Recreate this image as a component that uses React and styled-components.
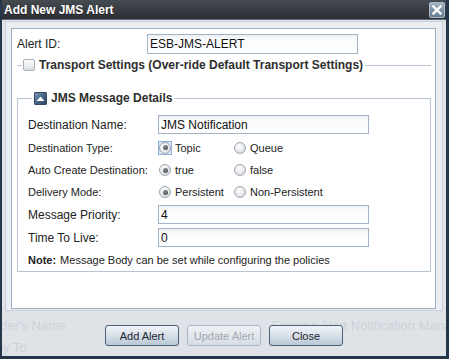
import React from "react";
import styled, { createGlobalStyle } from "styled-components";

const GlobalStyle = createGlobalStyle`
  html, body {
    margin: 0;
    padding: 0;
    background: #dfe3e8;
  }
  body {
    font-family: "Liberation Sans", Arial, sans-serif;
  }
`;

const Dialog = styled.div`
  width: 449px;
  height: 359px;
  box-sizing: border-box;
  display: flex;
  flex-direction: column;
  background: #dfe3e8;
  border-left: 2px solid #26364a;
  border-right: 3px solid #26364a;
  border-bottom: 3px solid #26364a;
  overflow: hidden;
`;

const TitleBar = styled.div`
  height: 19px;
  flex: none;
  display: flex;
  align-items: center;
  justify-content: space-between;
  padding: 0 2px 0 2px;
  margin-left: -2px;
  margin-right: -3px;
  background: linear-gradient(#464a51 0%, #3a3e44 45%, #2c2f34 100%);
  border-bottom: 1px solid #5b6b7c;
`;

const Title = styled.span`
  color: #fff;
  font-weight: bold;
  font-size: 12px;
  padding-left: 2px;
  text-shadow: 0 1px 0 #1a1c1f;
`;

const CloseBox = styled.div`
  width: 16px;
  height: 16px;
  box-sizing: border-box;
  margin-right: 2px;
  margin-top: 1px;
  border: 1px solid #aab7c6;
  border-radius: 2px;
  background: linear-gradient(#a4b4c6 0%, #7c90a7 50%, #667c95 100%);
  display: flex;
  align-items: center;
  justify-content: center;
`;

const Body = styled.div`
  flex: none;
  padding: 1px 3px 0 3px;
`;

const Frame = styled.div`
  height: 290px;
  box-sizing: border-box;
  border: 1px solid #c7d0da;
  background: #ebeef1;
  padding: 6px 6px 1px 5px;
`;

const Panel = styled.div`
  height: 100%;
  box-sizing: border-box;
  border: 1px solid #9db0c6;
  background: #fff;
  padding: 5px 4px 0 5px;
  color: #222;
`;

const TopRow = styled.div`
  display: flex;
  align-items: center;
  height: 20px;
`;

const TopLabel = styled.span`
  width: 130px;
  font-size: 12px;
`;

const TextInput = styled.input`
  width: ${(p) => p.$w}px;
  height: ${(p) => p.$h}px;
  box-sizing: border-box;
  border: 1px solid #a3b3c5;
  background: linear-gradient(#eceef1 0px, #fbfbfc 4px, #fff 100%);
  padding: 0 0 0 ${(p) => p.$pad || 2}px;
  margin: 0;
  font-family: "Liberation Sans", Arial, sans-serif;
  font-size: 12px;
  color: #111;
  outline: none;
`;

const Section = styled.fieldset`
  margin: ${(p) => p.$top}px 0 0 0;
  padding: ${(p) => (p.$collapsed ? "0" : "8px 10px 1px 10px")};
  border: none;
  border-top: 1px solid #b8c4d2;
  border-left: ${(p) => (p.$collapsed ? "none" : "1px solid #b8c4d2")};
  border-right: ${(p) => (p.$collapsed ? "none" : "1px solid #b8c4d2")};
  border-bottom: ${(p) => (p.$collapsed ? "none" : "1px solid #b8c4d2")};
  min-width: 0;
`;

const Legend = styled.legend`
  display: flex;
  align-items: center;
  gap: ${(p) => p.$gap}px;
  height: 14px;
  margin-left: ${(p) => p.$ml}px;
  padding: 0 2px 0 ${(p) => p.$pl}px;
  font-size: 12px;
  font-weight: bold;
  color: #2e2e2e;
  line-height: 14px;
`;

const CheckBox = styled.span`
  width: 12px;
  height: 12px;
  box-sizing: border-box;
  border: 1px solid #a9b0b8;
  border-radius: 2px;
  background: linear-gradient(#fdfdfd, #dcdfe3);
`;

const CollapseIcon = styled.span`
  width: 13px;
  height: 13px;
  box-sizing: border-box;
  border: 1px solid #34485f;
  border-radius: 1px;
  background: linear-gradient(135deg, #7f98b5 0%, #4c6989 45%, #2c4563 100%);
  display: flex;
  align-items: center;
  justify-content: center;
`;

const Row = styled.div`
  display: flex;
  align-items: center;
  height: ${(p) => p.$h}px;
`;

const Label = styled.span`
  width: 130px;
  flex: none;
  font-size: ${(p) => (p.$small ? 11 : 12)}px;
  color: #222;
`;

const Option = styled.label`
  display: flex;
  align-items: center;
  width: 75px;
  font-size: 11px;
  color: #222;
  white-space: nowrap;
`;

const RadioWrap = styled.span`
  width: 14px;
  height: 14px;
  box-sizing: border-box;
  margin-right: 3px;
  display: flex;
  align-items: center;
  justify-content: center;
  border: 1px solid ${(p) => (p.$focus ? "#8fb0da" : "transparent")};
  background: ${(p) => (p.$focus ? "#dbe7f6" : "transparent")};
`;

const RadioCircle = styled.span`
  width: 12px;
  height: 12px;
  box-sizing: border-box;
  border-radius: 50%;
  border: 1px solid #a2a9b1;
  background: radial-gradient(circle at 40% 35%, #ffffff 0%, #e8eaed 50%, #c9cdd2 100%);
  display: flex;
  align-items: center;
  justify-content: center;

  &::after {
    content: "";
    display: ${(p) => (p.$checked ? "block" : "none")};
    width: 5px;
    height: 5px;
    border-radius: 50%;
    background: radial-gradient(circle at 40% 35%, #8a8f95, #3e4247);
  }
`;

const Note = styled.div`
  height: 21px;
  display: flex;
  align-items: center;
  font-size: 11px;
  color: #222;
  white-space: nowrap;

  b {
    margin-right: 4px;
  }
`;

const Footer = styled.div`
  position: relative;
  flex: 1;
  display: flex;
  justify-content: center;
  gap: 8px;
  padding-top: 14px;
  overflow: hidden;
`;

const Ghost = styled.span`
  position: absolute;
  left: ${(p) => p.$x}px;
  top: ${(p) => p.$y}px;
  font-size: 13px;
  color: #cdd2d7;
  white-space: nowrap;
`;

const Button = styled.button`
  position: relative;
  width: 74px;
  height: 21px;
  box-sizing: border-box;
  border-radius: 3px;
  border: 1px solid ${(p) => (p.disabled ? "#a9b6c3" : "#4a6079")};
  background: ${(p) =>
    p.disabled
      ? "linear-gradient(#eef1f4 0%, #e3e8ed 50%, #d6dde4 100%)"
      : "linear-gradient(#f0f3f6 0%, #dbe2ea 45%, #b9c7d6 100%)"};
  color: ${(p) => (p.disabled ? "#a2a8ae" : "#1e2630")};
  font-family: "Liberation Sans", Arial, sans-serif;
  font-size: 11px;
  padding: 0;
`;

const Radio = ({ checked, focus, children }) => (
  <Option>
    <RadioWrap $focus={focus}>
      <RadioCircle $checked={checked} />
    </RadioWrap>
    {children}
  </Option>
);

export default function App() {
  return (
    <>
      <GlobalStyle />
      <Dialog>
        <TitleBar>
          <Title>Add New JMS Alert</Title>
          <CloseBox>
            <svg width="10" height="10" viewBox="0 0 10 10">
              <path d="M1.5 1.5 L8.5 8.5 M8.5 1.5 L1.5 8.5" stroke="#fff" strokeWidth="2.4" strokeLinecap="square" />
            </svg>
          </CloseBox>
        </TitleBar>
        <Body>
          <Frame>
            <Panel>
              <TopRow>
                <TopLabel>Alert ID:</TopLabel>
                <TextInput $w={211} $h={20} defaultValue="ESB-JMS-ALERT" />
              </TopRow>

              <Section $collapsed $top={4}>
                <Legend $ml={5} $pl={1} $gap={4}>
                  <CheckBox />
                  Transport Settings (Over-ride Default Transport Settings)
                </Legend>
              </Section>

              <Section $top={19}>
                <Legend $ml={4} $pl={2} $gap={4}>
                  <CollapseIcon>
                    <svg width="9" height="7" viewBox="0 0 9 7">
                      <path d="M0.5 6 L4.5 1.5 L8.5 6 Z" fill="#fff" />
                    </svg>
                  </CollapseIcon>
                  JMS Message Details
                </Legend>

                <Row $h={23}>
                  <Label>Destination Name:</Label>
                  <TextInput $w={211} $h={19} defaultValue="JMS Notification" />
                </Row>
                <Row $h={23}>
                  <Label $small>Destination Type:</Label>
                  <Radio checked focus>Topic</Radio>
                  <Radio>Queue</Radio>
                </Row>
                <Row $h={22}>
                  <Label $small>Auto Create Destination:</Label>
                  <Radio checked>true</Radio>
                  <Radio>false</Radio>
                </Row>
                <Row $h={22}>
                  <Label $small>Delivery Mode:</Label>
                  <Radio checked>Persistent</Radio>
                  <Radio>Non-Persistent</Radio>
                </Row>
                <Row $h={23}>
                  <Label>Message Priority:</Label>
                  <TextInput $w={211} $h={19} defaultValue="4" />
                </Row>
                <Row $h={23}>
                  <Label>Time To Live:</Label>
                  <TextInput $w={211} $h={19} defaultValue="0" />
                </Row>
                <Note>
                  <b>Note:</b> Message Body can be set while configuring the policies
                </Note>
              </Section>
            </Panel>
          </Frame>
        </Body>
        <Footer>
          <Ghost $x={-2} $y={7}>der's Name</Ghost>
          <Ghost $x={-2} $y={29}>ly To</Ghost>
          <Ghost $x={270} $y={7}>Fiscone Alert Notification Manager</Ghost>
          <Button>Add Alert</Button>
          <Button disabled>Update Alert</Button>
          <Button>Close</Button>
        </Footer>
      </Dialog>
    </>
  );
}
